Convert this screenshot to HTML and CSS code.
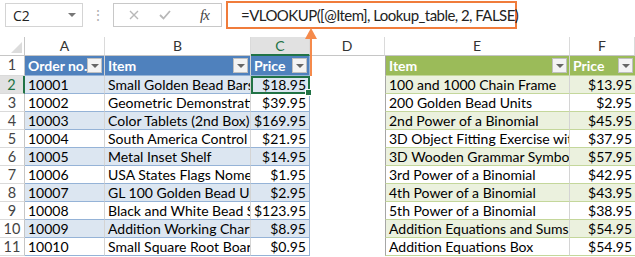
FILE: index.html
```html
<!DOCTYPE html>
<html lang="en">
<head>
    <meta charset="UTF-8">
    <title>VLOOKUP</title>
    <link rel="stylesheet" href="styles.css">
</head>
<body>
    <div class="app">
        <!-- formula bar -->
        <div class="formula-bar">
            <div class="name-box">
                <span>C2</span>
                <span class="caret"></span>
            </div>
            <div class="dots">⋮</div>
            <div class="fx-box">
                <svg class="btn-x" width="10" height="10" viewBox="0 0 10 10">
                    <path d="M1 1 L9 9 M9 1 L1 9" stroke="#b8b8b8" stroke-width="1.4" fill="none"/>
                </svg>
                <svg class="btn-ok" width="12" height="10" viewBox="0 0 12 10">
                    <path d="M1 5 L4.5 8.5 L11 1" stroke="#b8b8b8" stroke-width="1.8" fill="none"/>
                </svg>
                <span class="btn-fx">fx</span>
            </div>
            <div class="formula">=VLOOKUP([@Item], Lookup_table, 2, FALSE)</div>
        </div>

        <div class="sheet">
            <!-- column headers -->
            <div class="corner"></div>
            <div class="colh">A</div>
            <div class="colh">B</div>
            <div class="colh sel">C</div>
            <div class="colh">D</div>
            <div class="colh">E</div>
            <div class="colh">F</div>

            <!-- row 1 -->
            <div class="rowh">1</div>
            <div class="c bh">Order no.<i class="dd"></i></div>
            <div class="c bh">Item<i class="dd"></i></div>
            <div class="c bh last">Price<i class="dd"></i></div>
            <div class="c d"></div>
            <div class="c gh first">Item<i class="dd"></i></div>
            <div class="c gh">Price<i class="dd"></i></div>

            <div class="rowh active">2</div>
            <div class="c b band">10001</div>
            <div class="c b band">Small Golden Bead Bars</div>
            <div class="c b band last num selected">$18.95<i class="handle"></i></div>
            <div class="c d"></div>
            <div class="c g band first">100 and 1000 Chain Frame</div>
            <div class="c g band num">$13.95</div>

            <div class="rowh">3</div>
            <div class="c b">10002</div>
            <div class="c b">Geometric Demonstration</div>
            <div class="c b last num">$39.95</div>
            <div class="c d"></div>
            <div class="c g first">200 Golden Bead Units</div>
            <div class="c g num">$2.95</div>

            <div class="rowh">4</div>
            <div class="c b band">10003</div>
            <div class="c b band">Color Tablets (2nd Box)</div>
            <div class="c b band last num">$169.95</div>
            <div class="c d"></div>
            <div class="c g band first">2nd Power of a Binomial</div>
            <div class="c g band num">$45.95</div>

            <div class="rowh">5</div>
            <div class="c b">10004</div>
            <div class="c b">South America Control</div>
            <div class="c b last num">$21.95</div>
            <div class="c d"></div>
            <div class="c g first">3D Object Fitting Exercise with</div>
            <div class="c g num">$37.95</div>

            <div class="rowh">6</div>
            <div class="c b band">10005</div>
            <div class="c b band">Metal Inset Shelf</div>
            <div class="c b band last num">$14.95</div>
            <div class="c d"></div>
            <div class="c g band first">3D Wooden Grammar Symbols</div>
            <div class="c g band num">$57.95</div>

            <div class="rowh">7</div>
            <div class="c b">10006</div>
            <div class="c b">USA States Flags Nomenclature</div>
            <div class="c b last num">$1.95</div>
            <div class="c d"></div>
            <div class="c g first">3rd Power of a Binomial</div>
            <div class="c g num">$42.95</div>

            <div class="rowh">8</div>
            <div class="c b band">10007</div>
            <div class="c b band">GL 100 Golden Bead Units</div>
            <div class="c b band last num">$2.95</div>
            <div class="c d"></div>
            <div class="c g band first">4th Power of a Binomial</div>
            <div class="c g band num">$43.95</div>

            <div class="rowh">9</div>
            <div class="c b">10008</div>
            <div class="c b">Black and White Bead Stair</div>
            <div class="c b last num">$123.95</div>
            <div class="c d"></div>
            <div class="c g first">5th Power of a Binomial</div>
            <div class="c g num">$38.95</div>

            <div class="rowh">10</div>
            <div class="c b band">10009</div>
            <div class="c b band">Addition Working Charts</div>
            <div class="c b band last num">$8.95</div>
            <div class="c d"></div>
            <div class="c g band first">Addition Equations and Sums</div>
            <div class="c g band num">$54.95</div>

            <div class="rowh">11</div>
            <div class="c b">10010</div>
            <div class="c b">Small Square Root Board</div>
            <div class="c b last num">$0.95</div>
            <div class="c d"></div>
            <div class="c g first">Addition Equations Box</div>
            <div class="c g num">$54.95</div>
        </div>

        <!-- arrow pointing at the formula -->
        <div class="arrow"></div>
    </div>
</body>
</html>
```

FILE: styles.css
```css
body{
    margin: 0;
    background: #fff;
}
.app{
    position: relative;
    width: 635px;
    height: 257px;
    overflow: hidden;
    font-family: Lato, "Open Sans", sans-serif;
}

/* formula bar */
.formula-bar{
    height: 37px;
    display: flex;
    align-items: flex-start;
    padding-top: 1px;
    box-sizing: border-box;
}
.name-box{
    margin: 2px 0 0 5px;
    width: 78px;
    height: 24px;
    box-sizing: border-box;
    border: 1px solid #d4d4d4;
    display: flex;
    align-items: center;
    justify-content: space-between;
    padding: 0 6px 0 7px;
    font-family: "Open Sans", sans-serif;
    font-size: 14px;
    color: #222;
}
.caret{
    width: 0;
    height: 0;
    border-left: 4px solid transparent;
    border-right: 4px solid transparent;
    border-top: 4px solid #777;
}
.dots{
    width: 30px;
    text-align: center;
    color: #b0b0b0;
    font-size: 14px;
    line-height: 28px;
}
.fx-box{
    margin-top: 2px;
    width: 109px;
    height: 24px;
    box-sizing: border-box;
    border: 1px solid #c8c8c8;
    display: flex;
    align-items: center;
    padding: 0 0 0 15px;
}
.btn-x{
    margin-right: 20px;
}
.btn-ok{
    margin-right: 29px;
}
.btn-fx{
    font-family: "Liberation Serif", serif;
    font-style: italic;
    color: #444;
    font-size: 15px;
    letter-spacing: -1px;
}
.formula{
    margin-left: 4px;
    width: 291px;
    height: 28px;
    box-sizing: border-box;
    border: 2px solid #f07c3b;
    padding-left: 13px;
    font-family: Lato, sans-serif;
    font-size: 15px;
    letter-spacing: -0.55px;
    line-height: 24px;
    color: #222;
    white-space: nowrap;
}

/* grid */
.sheet{
    display: grid;
    grid-template-columns: 25px 80px 146px 59px 75px 185px 65px;
    grid-template-rows: 19px 20px repeat(10, 18px);
    font-size: 14px;
}
.corner{
    background: #fff;
    border-bottom: 1px solid #c6c6c6;
    border-right: 1px solid #c6c6c6;
    position: relative;
}
.corner::after{
    content: "";
    position: absolute;
    right: 2px;
    bottom: 2px;
    border-left: 11px solid transparent;
    border-bottom: 11px solid #dcdcdc;
}
.colh{
    border-bottom: 1px solid #c6c6c6;
    border-right: 1px solid #dadada;
    text-align: center;
    font-size: 14px;
    line-height: 18px;
    color: #333;
}
.colh.sel{
    background: #e1e1e1;
    color: #217346;
    border-bottom: 2px solid #217346;
}
.rowh{
    border-right: 1px solid #c6c6c6;
    border-bottom: 1px solid #dadada;
    text-align: center;
    font-size: 14.5px;
    color: #444;
    line-height: 17px;
}
.rowh.active{
    background: #e1e1e1;
    color: #217346;
    border-right: 2px solid #217346;
}

.c{
    position: relative;
    white-space: nowrap;
    overflow: hidden;
    padding: 0 3px;
    line-height: 17px;
    color: #000;
    box-sizing: border-box;
}
.num{
    text-align: right;
}
.selected{
    overflow: visible;
}

/* blue table */
.bh{
    background: #4f81bd;
    color: #fff;
    font-weight: bold;
    line-height: 20px;
    border-right: 1px solid #d4d4d4;
    border-bottom: 1px solid #95b3d7;
}
.b{
    border-bottom: 1px solid #95b3d7;
    border-right: 1px solid #d4d4d4;
}
.b.band{
    background: #dce6f1;
}
.b.last, .bh.last{
    border-right: 1px solid #95b3d7;
}
.selected{
    outline: 2px solid #217346;
    outline-offset: -2px;
    z-index: 1;
}
.handle{
    position: absolute;
    right: -3px;
    bottom: -3px;
    width: 5px;
    height: 5px;
    background: #217346;
    border: 1px solid #fff;
}

/* green table */
.gh{
    background: #9bbb59;
    color: #fff;
    font-weight: bold;
    line-height: 20px;
    border-bottom: 1px solid #c4d79b;
}
.g{
    border-bottom: 1px solid #c4d79b;
}
.g.band{
    background: #ebf1de;
}
.first{
    border-left: 1px solid #a6a6a6;
}
.gh.first, .g.first{
    border-right: 1px solid #d4d4d4;
}

/* filter dropdown */
.dd{
    position: absolute;
    right: 2px;
    top: 2px;
    width: 15px;
    height: 15px;
    box-sizing: border-box;
    background: #f3f3f3;
    border: 1px solid #c0c0c0;
}
.dd::after{
    content: "";
    position: absolute;
    left: 3px;
    top: 5px;
    border-left: 4px solid transparent;
    border-right: 4px solid transparent;
    border-top: 4px solid #666;
}

/* orange arrow */
.arrow{
    position: absolute;
    left: 310px;
    top: 38px;
    width: 2px;
    height: 38px;
    background: #f58a4b;
    z-index: 2;
}
.arrow::before{
    content: "";
    position: absolute;
    left: -5px;
    top: -10px;
    border-left: 6px solid transparent;
    border-right: 6px solid transparent;
    border-bottom: 11px solid #f58a4b;
}
```
